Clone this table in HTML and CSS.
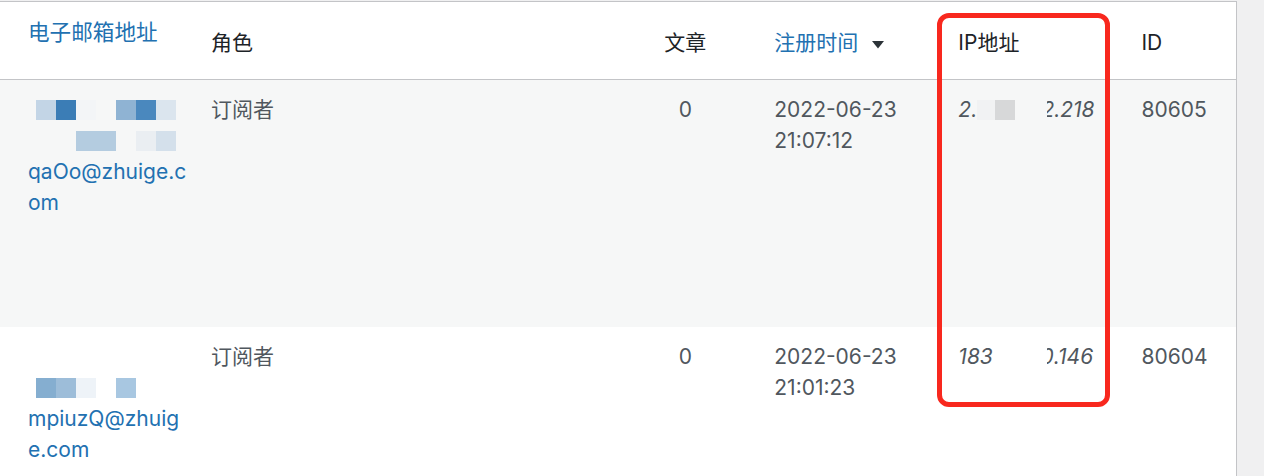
FILE: index.html
```html
<!DOCTYPE html>
<html lang="zh-CN">
<head>
<meta charset="utf-8">
<title>用户</title>
<link rel="stylesheet" href="styles.css">
</head>
<body>
<div class="page">
  <table class="users">
    <colgroup>
      <col class="c-email">
      <col class="c-role">
      <col class="c-posts">
      <col class="c-date">
      <col class="c-ip">
      <col class="c-id">
    </colgroup>
    <thead>
      <tr>
        <th class="th-email"><a class="sort">电子邮箱地址</a></th>
        <th>角色</th>
        <th class="num">文章</th>
        <th><a class="sort">注册时间</a><svg class="arrow" width="12" height="8" viewBox="0 0 12 8"><polygon points="0,0 12,0 6,7.5" fill="#2c3338"/></svg></th>
        <th>IP地址</th>
        <th>ID</th>
      </tr>
    </thead>
    <tbody>
      <tr class="alt">
        <td class="email tall">
          <div class="mosaic"><span class="b" style="background:#c3d5e6"></span><span class="b" style="background:#3b7db6"></span><span class="b" style="background:#f3f5f7"></span><span class="gap"></span><span class="b" style="background:#8fb3d3"></span><span class="b" style="background:#4a88be"></span><span class="b" style="background:#dbe5ee"></span></div>
          <div class="mosaic"><span class="gap"></span><span class="gap"></span><span class="b2" style="background:#b4cce0"></span><span class="gap"></span><span class="b" style="background:#eaeef2"></span><span class="b" style="background:#d4e0eb"></span></div>
          <a class="mail">qaOo@zhuige.c<br>om</a>
        </td>
        <td>订阅者</td>
        <td class="num">0</td>
        <td>2022-06-23<br>21:07:12</td>
        <td class="ip"><span>2.</span><span class="mask" style="background:#f1f2f3"></span><span class="mask" style="background:#d7d8d9"></span><span class="space s1"></span><span class="clip">2</span><span>.218</span></td>
        <td>80605</td>
      </tr>
      <tr>
        <td class="email low">
          <div class="mosaic"></div>
          <div class="mosaic"><span class="b" style="background:#85aed0"></span><span class="b" style="background:#9dbdd9"></span><span class="b" style="background:#eef3f8"></span><span class="gap"></span><span class="b" style="background:#a8c7e1"></span></div>
          <a class="mail">mpiuzQ@zhuig<br>e.com</a>
        </td>
        <td>订阅者</td>
        <td class="num">0</td>
        <td>2022-06-23<br>21:01:23</td>
        <td class="ip"><span>183</span><span class="space s2"></span><span class="clip">0</span><span>.146</span></td>
        <td>80604</td>
      </tr>
    </tbody>
  </table>
  <div class="highlight"></div>
</div>
</body>
</html>
```

FILE: styles.css
```css
html, body {
  margin: 0;
  padding: 0;
  background: #f0f0f1;
}

.page {
  position: relative;
  padding-top: 1px;
  height: 475px;
  overflow: hidden;
}

.users {
  width: 1237px;
  table-layout: fixed;
  border-collapse: collapse;
  background: #fff;
  border-top: 1px solid #c3c4c7;
  border-right: 1px solid #c3c4c7;
  font-family: Inter, "Noto Sans CJK SC", sans-serif;
  font-size: 21px;
  line-height: 31px;
  color: #50575e;
}

.c-email { width: 199px; }
.c-role { width: 409px; }
.c-posts { width: 154px; }
.c-date { width: 184px; }
.c-ip { width: 183px; }
.c-id { width: 107px; }

th {
  height: 78px;
  box-sizing: border-box;
  padding: 25px 12px 0;
  vertical-align: top;
  text-align: left;
  font-weight: 400;
  color: #1d2327;
  border-bottom: 1px solid #c3c4c7;
  white-space: nowrap;
}

th.th-email {
  padding-top: 15px;
  padding-left: 28px;
  font-size: 21.6px;
}

.sort {
  color: #2271b1;
  text-decoration: none;
}

.arrow {
  margin-left: 14px;
  vertical-align: 1px;
}

td {
  padding: 14px 12px 10px;
  vertical-align: top;
  text-align: left;
}

.num {
  text-align: center;
}

tr.alt td {
  background: #f6f7f7;
}

td.email {
  padding-left: 28px;
  padding-right: 10px;
}

td.tall {
  padding-bottom: 109px;
}

td.low {
  padding-bottom: 40px;
}

.mosaic {
  height: 31px;
  display: flex;
  align-items: center;
  padding-left: 8px;
}

.b, .gap {
  width: 20px;
  height: 20px;
  flex: none;
}

.b2 {
  width: 40px;
  height: 20px;
  flex: none;
}

.mail {
  display: block;
  color: #2271b1;
  white-space: nowrap;
}

.ip {
  font-style: italic;
  white-space: nowrap;
}

.ip span {
  display: inline-block;
  vertical-align: top;
}

.mask {
  width: 18px;
  height: 20px;
  margin-top: 6px;
}

.ip .mask + .mask {
  width: 20px;
}

.space.s1 { width: 32px; }
.space.s2 { width: 54px; }

.clip {
  width: 7px;
  overflow: hidden;
  direction: rtl;
}

.highlight {
  position: absolute;
  left: 937px;
  top: 13px;
  width: 163px;
  height: 384px;
  border: 5px solid #f8281e;
  border-radius: 12px;
}
```
